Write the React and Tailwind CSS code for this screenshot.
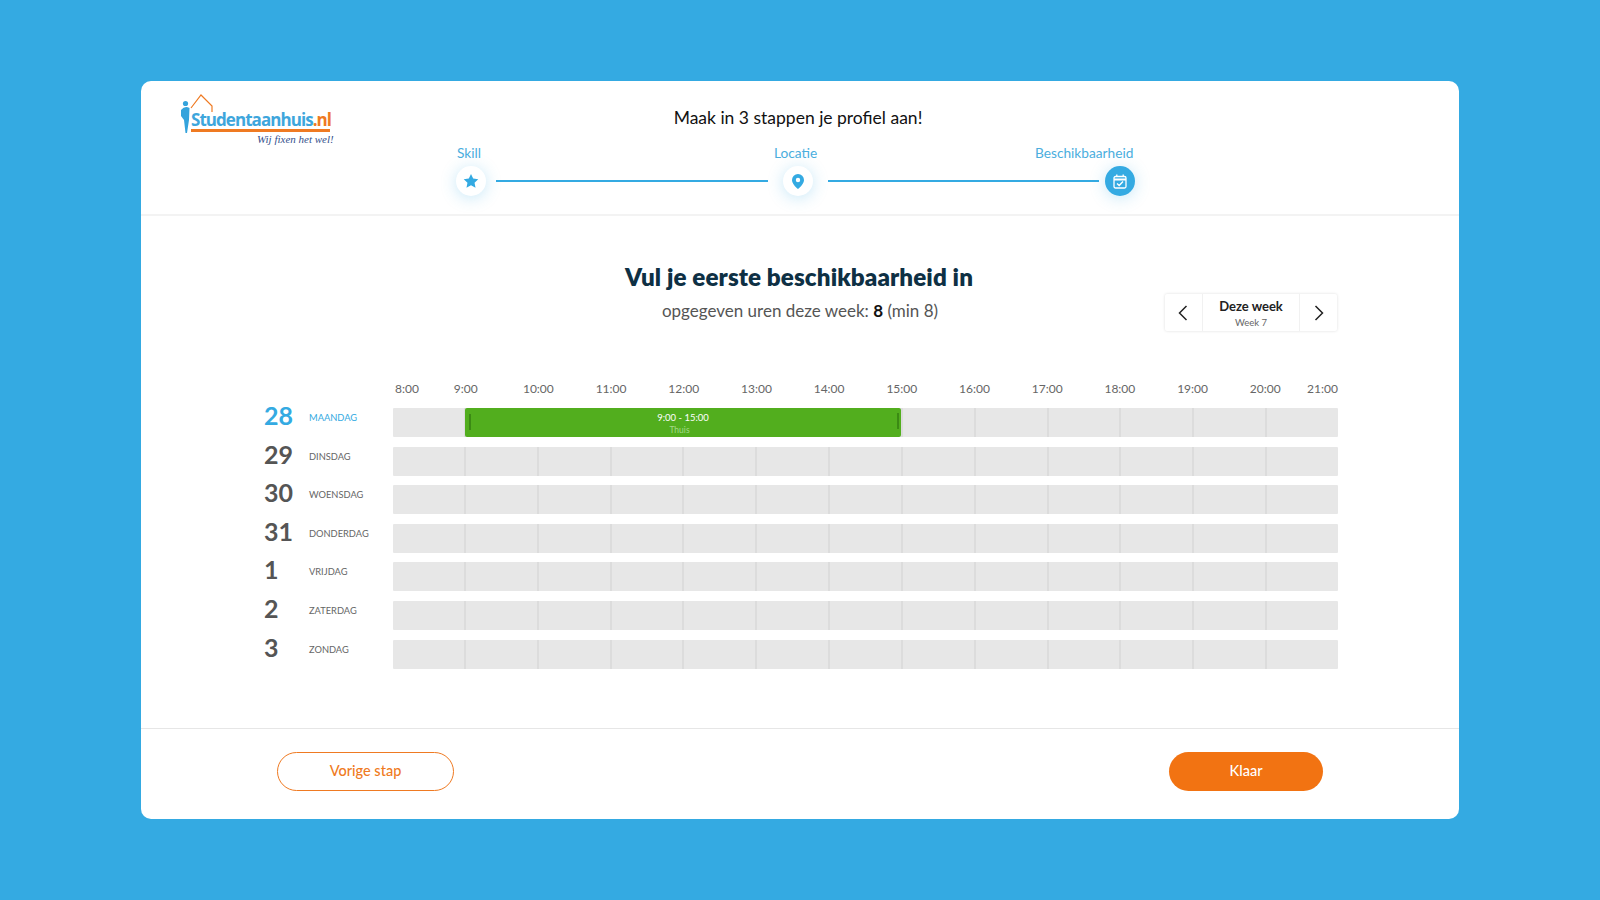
const hours = ["8:00","9:00","10:00","11:00","12:00","13:00","14:00","15:00","16:00","17:00","18:00","19:00","20:00"];
const days = [["28","MAANDAG"],["29","DINSDAG"],["30","WOENSDAG"],["31","DONDERDAG"],["1","VRIJDAG"],["2","ZATERDAG"],["3","ZONDAG"]];
const shadow = "shadow-[0_2px_16px_rgba(52,170,226,0.28)]";

function Logo() {
  return (
    <div className="relative w-[156px] h-[58px] shrink-0">
      <svg className="absolute left-0 top-0" width="60" height="42" viewBox="0 0 60 42" fill="none">
        <path d="M11 14 L21 1 L32 12 V18" stroke="#ef7a22" strokeWidth="1.2" />
        <circle cx="5.5" cy="9.5" r="2.6" fill="#34a3dc" />
        <path d="M1 16 Q5 11 9.5 14 L9 26 L7 39 H5.5 L4 26 L1 22 Z" fill="#34a3dc" />
      </svg>
      <div className="absolute left-[11px] top-[15px] whitespace-nowrap text-[17px] leading-[22px] font-bold tracking-[-0.95px] text-[#3ea6dc] font-['Open_Sans',sans-serif]">
        Studentaanhuis<span className="text-[#ef7a22]">.nl</span>
      </div>
      <div className="absolute left-[11px] top-[35px] w-[139px] h-[3px] bg-[#ef7a22]" />
      <div className="absolute left-[77px] top-[38px] whitespace-nowrap text-[11px] leading-[14px] italic text-[#34508c] font-['Liberation_Serif',serif]">
        Wij fixen het wel!
      </div>
    </div>
  );
}

function Star() {
  return (
    <svg width="16" height="16" viewBox="0 0 24 24" fill="#34aae2">
      <path d="M12 1.5l3.3 6.9 7.6 1-5.6 5.2 1.5 7.5L12 18.4l-6.8 3.7 1.5-7.5L1.1 9.4l7.6-1z" />
    </svg>
  );
}
function Pin() {
  return (
    <svg width="12" height="15" viewBox="0 0 12 15">
      <path fillRule="evenodd" fill="#34aae2" d="M6 0a6 6 0 0 1 6 6c0 3.4-3.5 7-6 9-2.5-2-6-5.6-6-9a6 6 0 0 1 6-6zm0 3.8a2.2 2.2 0 1 0 0 4.4 2.2 2.2 0 0 0 0-4.4z" />
    </svg>
  );
}
function Cal() {
  return (
    <svg width="14" height="15" viewBox="0 0 14 15" fill="none" stroke="#fff">
      <rect x="1" y="2.5" width="12" height="11.5" rx="1.5" strokeWidth="1.3" />
      <path d="M1 5.5H13" strokeWidth="1.8" />
      <path d="M3.8 0.5V3M10.2 0.5V3" strokeWidth="1.3" />
      <path d="M4 9.5L6.2 11.5L10 7.5" strokeWidth="1.4" />
    </svg>
  );
}

function Stepper() {
  return (
    <div className="ml-[106px] w-[710px] mt-[15px]">
      <div className="flex h-[18px] text-[13.7px] leading-[18px] text-[#4aaede]">
        <span className="ml-[15px] w-[317px]">Skill</span>
        <span className="w-[261px]">Locatie</span>
        <span className="whitespace-nowrap">Beschikbaarheid</span>
      </div>
      <div className="flex items-center mt-[4px] ml-[14px]">
        <div className={`w-[30px] h-[30px] shrink-0 rounded-full bg-white flex items-center justify-center ${shadow}`}><Star /></div>
        <div className="ml-[10px] w-[272px] h-[2px] bg-[#34aae2]" />
        <div className={`ml-[15px] w-[30px] h-[30px] rounded-full bg-white flex items-center justify-center shrink-0 ${shadow}`}><Pin /></div>
        <div className="ml-[15px] w-[271px] h-[2px] bg-[#34aae2]" />
        <div className={`ml-[6px] w-[30px] h-[30px] rounded-full bg-[#34aae2] flex items-center justify-center shrink-0 ${shadow}`}><Cal /></div>
      </div>
    </div>
  );
}

function Chevron({ left }) {
  return (
    <svg width="10" height="16" viewBox="0 0 10 16" fill="none" stroke="#222" strokeWidth="1.5">
      <path d={left ? "M8.5 1L1.5 8L8.5 15" : "M1.5 1L8.5 8L1.5 15"} />
    </svg>
  );
}

function WeekNav() {
  return (
    <div className="absolute right-[122px] top-[78px] w-[172px] h-[37px] flex rounded-[2px] shadow-[0_0_3px_rgba(0,0,0,0.14)] text-center">
      <div className="w-[38px] pr-[2px] flex items-center justify-center border-r border-[#f1f1f1]"><Chevron left /></div>
      <div className="flex-1 flex flex-col items-center pt-[4px]">
        <div className="text-[13px] leading-[16px] font-bold text-[#222]">Deze week</div>
        <div className="text-[9.5px] leading-[12px] mt-[3px] text-[#666]">Week 7</div>
      </div>
      <div className="w-[38px] flex items-center justify-center border-l border-[#f1f1f1]"><Chevron /></div>
    </div>
  );
}

function Row({ n, label, active }) {
  return (
    <div className="flex h-[29px]">
      <div className={`w-[45px] -mt-[5px] text-[25px] leading-[24px] font-bold ${active ? "text-[#34aae2]" : "text-[#555]"}`}>{n}</div>
      <div className={`w-[84px] text-[9.3px] leading-[19px] ${active ? "text-[#34aae2]" : "text-[#666]"}`}>{label}</div>
      <div className="relative flex w-[945px] h-[29px] bg-[#e7e7e7] rounded-[1px]">
        {hours.map((h, i) => (
          <div key={h} className={`flex-1 ${i > 0 ? "border-l-2 border-[#dcdcdc]" : ""}`} />
        ))}
        {active && (
          <div className="absolute left-[72px] top-0 w-[436px] h-[29px] rounded-[2px] bg-[#52ae1e] text-center">
            <div className="absolute left-[4px] top-[6px] w-[2px] h-[16px] bg-[#3b8a14]" />
            <div className="absolute right-[2px] top-[5px] w-[2px] h-[16px] bg-[#3b8a14]" />
            <div className="text-[9.5px] leading-[12px] pt-[4px] text-white">9:00 - 15:00</div>
            <div className="text-[8.5px] leading-[10px] pt-[1px] -ml-[7px] text-[#a5d98a]">Thuis</div>
          </div>
        )}
      </div>
    </div>
  );
}

export default function App() {
  return (
    <div className="min-h-screen h-[900px] bg-[#34aae2] flex items-center justify-center font-['Lato','Liberation_Sans',sans-serif]">
      <div className="w-[1318px] h-[738px] bg-white rounded-[10px] flex flex-col overflow-hidden">
        <header className="h-[135px] shrink-0 border-b-2 border-[#f3f3f3] flex pl-[39px] pt-[13px]">
          <Logo />
          <div className="flex-1">
            <div className="text-[17.5px] leading-[24px] text-[#111] text-center w-[1032px] mt-[12px] -translate-x-[54px]">Maak in 3 stappen je profiel aan!</div>
            <div className="-mt-[1px]"><Stepper /></div>
          </div>
        </header>
        <main className="relative flex-1">
          <h1 className="mt-[46px] text-center text-[24.2px] leading-[30px] font-extrabold text-[#0e3044] tracking-[0.1px] -translate-x-[1px]">Vul je eerste beschikbaarheid in</h1>
          <p className="mt-[7px] text-center text-[17px] leading-[24px] text-[#555]">opgegeven uren deze week: <b className="text-[#111]">8</b> (min 8)</p>
          <WeekNav />
          <div className="ml-[123px] mt-[58px]">
            <div className="flex w-[1074px] pl-[129px] h-[27px] text-[12px] leading-[16px] text-[#666]">
              {hours.map((h, i) => (
                <div key={h} className="w-[72.7px] shrink-0">
                  <span className={`inline-block whitespace-nowrap ${i === 0 ? "ml-[2px]" : "-translate-x-1/2"}`}>{h}</span>
                </div>
              ))}
              <div className="w-0 flex justify-end"><span className="whitespace-nowrap">21:00</span></div>
            </div>
            <div className="flex flex-col gap-[9.6px] w-[1074px]">
              {days.map(([n, l], i) => <Row key={n} n={n} label={l} active={i === 0} />)}
            </div>
          </div>
        </main>
        <footer className="h-[91px] shrink-0 border-t border-[#e6e6e6] flex items-start justify-between pt-[23px] pl-[136px] pr-[136px] text-[14.5px] font-medium">
          <button className="w-[177px] h-[39px] pb-[1px] rounded-full border border-[#ef7a22] text-[#ef7a22] bg-white">Vorige stap</button>
          <button className="w-[154px] h-[39px] pb-[1px] rounded-full bg-[#f27312] text-white">Klaar</button>
        </footer>
      </div>
    </div>
  );
}
